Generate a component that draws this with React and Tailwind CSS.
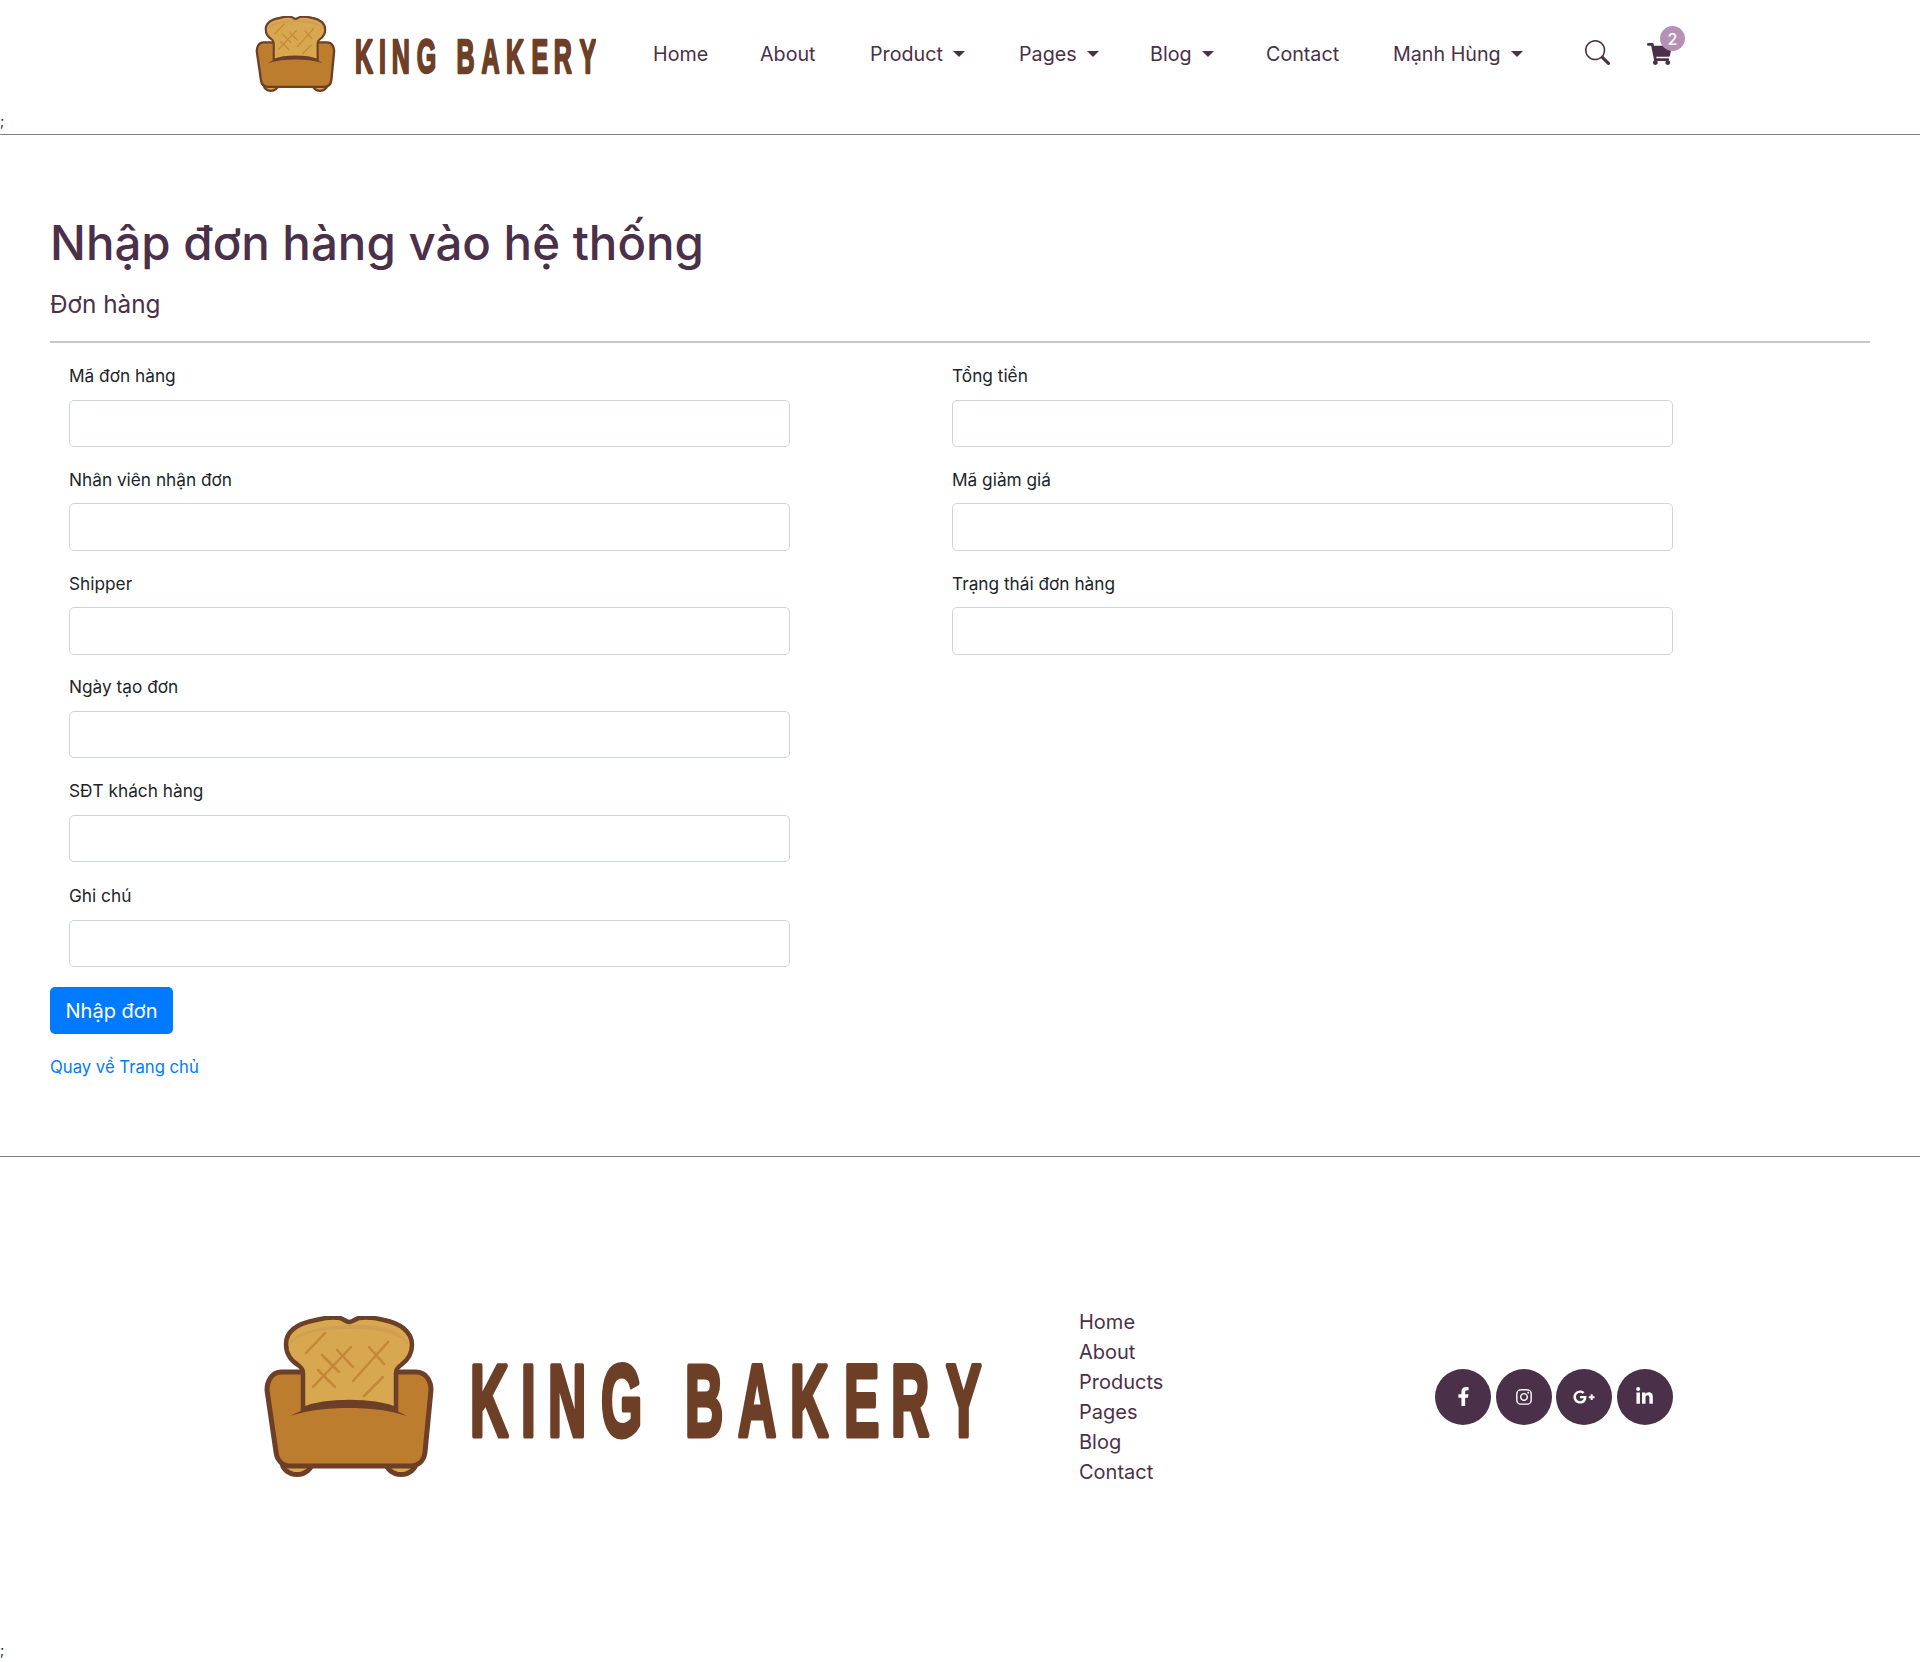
import { FaShoppingCart, FaFacebookF, FaInstagram, FaGooglePlusG, FaLinkedinIn } from "react-icons/fa";
import { BsSearch } from "react-icons/bs";

const leftFields = ["Mã đơn hàng", "Nhân viên nhận đơn", "Shipper", "Ngày tạo đơn", "SĐT khách hàng", "Ghi chú"];
const rightFields = ["Tổng tiền", "Mã giảm giá", "Trạng thái đơn hàng"];
const footerLinks = ["Home", "About", "Products", "Pages", "Blog", "Contact"];
const socials = [
  { Icon: FaFacebookF, size: "text-[19px]" },
  { Icon: FaInstagram, size: "text-[18px]" },
  { Icon: FaGooglePlusG, size: "text-[22px]" },
  { Icon: FaLinkedinIn, size: "text-[19px]" },
];

// wordmark letters sit at these x values once the 0.52 horizontal squeeze is applied
const wordmarkX = (dx) => [206, 257, 284, 337, 380, 421, 474, 526, 580, 627, 682].map((x) => (x + dx) / 0.52).join(" ");

const Logo = ({ className, dx = 0 }) => (
  <svg viewBox="0 0 721 161" className={className} aria-label="King Bakery logo">
    {/* feet */}
    <path d="M18 146a15 12.5 0 0 0 30 0zM122 146a15 12.5 0 0 0 30 0z" fill="#d8a850" stroke="#6d3f27" strokeWidth="5" />
    {/* couch body */}
    <path d="M17 56h135c10 0 15 9 15 18l-6 62c-1 9-7 14-15 14H27c-9 0-14-6-15-14L3 74c0-9 5-18 14-18z" fill="#bd7d2f" stroke="#6d3f27" strokeWidth="5" />
    {/* toast */}
    <path d="M39 93V57c0-3-2-6-5-8-8-5-12-13-12-21C22 14 36 7 52 4c8-2 18-3 24-2 4 1 6 4 9 4s6-3 10-4c8-1 17 0 25 2 15 3 28 11 28 25 0 8-4 15-11 20-3 2-5 5-5 8v36c-13-5-29-7-47-7s-33 2-46 7z" fill="#d8a850" stroke="#6d3f27" strokeWidth="4.5" />
    <path d="M25 30c3-11 18-19 60-21s56 10 60 21c-10-13-30-17-60-17s-50 4-60 17z" fill="#cf9f52" />
    <path d="M26 100c14-8 36-13 59-13s45 5 58 13c-18-6-38-8-58-8s-41 2-59 8z" fill="#6d3f27" />
    {/* score marks */}
    <g stroke="#c4873a" strokeWidth="2.5" strokeLinecap="round" fill="none">
      <path d="M61 17L42 37M58 39l17 17M73 34l16 17M54 54l17 17M87 31L49 71M124 26L89 65M105 31l15 17M119 61L100 80" />
    </g>
    {/* wordmark */}
    <text
      y="120.5"
      x={wordmarkX(dx)}
      fontFamily="'Liberation Sans', sans-serif"
      fontWeight="700"
      fontSize="102"
      fill="#6d3f27"
      stroke="#6d3f27"
      strokeWidth="5"
      strokeLinejoin="round"
      transform="scale(0.52 1)"
    >
      KING BAKERY
    </text>
  </svg>
);

const Caret = () => <span className="ml-[10px] inline-block border-x-[6px] border-t-[6px] border-x-transparent border-t-[#4b3049]" />;

const NavItem = ({ label, dropdown, width }) => (
  <a href="#" className={`flex items-center whitespace-nowrap text-[19.7px] text-[#4b3049] ${width}`}>
    <span className="mt-[2px]">{label}</span>
    {dropdown && <Caret />}
  </a>
);

const Field = ({ label }) => (
  <div className="mb-[17.25px] [&:nth-child(5)]:mb-[18.75px]">
    <label className="mb-[9px] block h-[30px] pt-[0.5px] text-[17.25px] leading-[30px] text-[#212529]">{label}</label>
    <input type="text" className="block h-[47.5px] w-full rounded-[5px] border border-[#ced4da] bg-white" />
  </div>
);

export default function App() {
  return (
    <div className="h-[1662px] overflow-hidden bg-white font-['Inter','Liberation_Sans',sans-serif] text-[#212529]">
      <header className="border-b border-[#808080]">
        <div className="flex h-[108px] items-center pl-[255px]">
          <Logo className="h-[76px] w-[341px] shrink-0" dx={5} />
          <nav className="ml-[57px] flex items-center">
            <NavItem label="Home" width="w-[107px]" />
            <NavItem label="About" width="w-[110px]" />
            <NavItem label="Product" dropdown width="w-[149px]" />
            <NavItem label="Pages" dropdown width="w-[131px]" />
            <NavItem label="Blog" dropdown width="w-[116px]" />
            <NavItem label="Contact" width="w-[127px]" />
            <NavItem label="Mạnh Hùng" dropdown width="w-[192px]" />
          </nav>
          <BsSearch className="mt-[-3px] h-[25px] w-[25px] text-[#4b3049]" />
          <div className="relative ml-[37px]">
            <FaShoppingCart className="h-[22px] w-[25px] text-[#4b3049]" />
            <span className="absolute left-[13px] top-[-17px] flex h-[25px] w-[25px] items-center justify-center rounded-full bg-[#b592b5] text-[16px] font-medium text-white">2</span>
          </div>
        </div>
        <div className="h-[26px] text-[14px] leading-[26px]">;</div>
      </header>

      <main className="px-[50px] pt-[78px]">
        <h1 className="h-[60px] text-[47.45px] font-medium leading-[60px] text-[#4b3049]">Nhập đơn hàng vào hệ thống</h1>
        <h4 className="mt-[12.5px] h-[36px] text-[24.3px] leading-[36px] text-[#4b3049]">Đơn hàng</h4>
        <hr className="mt-[19.5px] border-t-2 border-[#c8c8c8]" />
        <div className="mt-[17.6px] grid grid-cols-[721px_721px] gap-x-[162px] pl-[19px]">
          <div>
            {leftFields.map((f) => <Field key={f} label={f} />)}
          </div>
          <div>
            {rightFields.map((f) => <Field key={f} label={f} />)}
          </div>
        </div>
        <button type="button" className="mt-[2.4px] block h-[47px] w-[123px] rounded-[5px] bg-[#007bff] pt-[2px] text-[20px] text-white">Nhập đơn</button>
        <a href="#" className="mt-[20px] block text-[16.7px] leading-[26px] text-[#007bff]">Quay về Trang chủ</a>
      </main>

      <footer className="mt-[76px] border-t border-[#808080]">
        <div className="flex items-center pl-[264px] pt-[150px]">
          <Logo className="h-[161px] w-[721px] shrink-0" />
          <ul className="ml-[94px] w-[356px] text-[20px] leading-[30px] text-[#4b3049]">
            {footerLinks.map((l) => <li key={l}>{l}</li>)}
          </ul>
          <div className="flex gap-[4.6px]">
            {socials.map(({ Icon, size }, i) => (
              <a key={i} href="#" className={`flex h-[56px] w-[56px] items-center justify-center rounded-full bg-[#4b3049] text-white ${size}`}>
                <Icon />
              </a>
            ))}
          </div>
        </div>
        <div className="mt-[150px] text-[14px] leading-[26px]">;</div>
      </footer>
    </div>
  );
}
